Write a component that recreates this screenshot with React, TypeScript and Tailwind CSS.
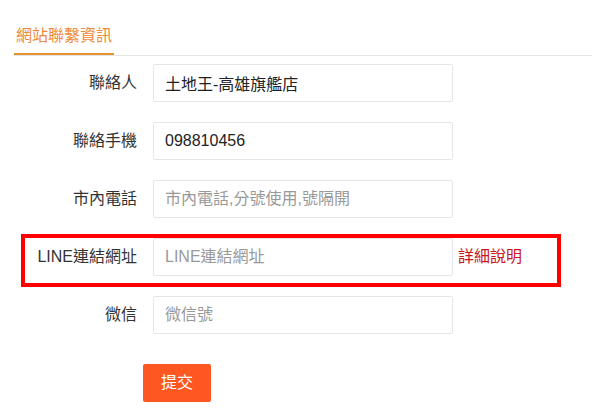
const rows = [
  { label: "聯絡人", value: "土地王-高雄旗艦店", placeholder: "" },
  { label: "聯絡手機", value: "098810456", placeholder: "" },
  { label: "市內電話", value: "", placeholder: "市內電話,分號使用,號隔開" },
  { label: "LINE連結網址", value: "", placeholder: "LINE連結網址", help: true },
  { label: "微信", value: "", placeholder: "微信號" },
];

export default function App() {
  return (
    <div
      className="w-[592px] h-[416px] bg-white pl-[14px] overflow-hidden"
      style={{ fontFamily: '"Liberation Sans", "Noto Sans CJK TC", sans-serif' }}
    >
      <div className="mt-[18px] flex border-b border-[#e6e6e6]">
        <div className="w-[100px] h-[37px] flex items-center justify-center border-b-2 border-[#e8912f] text-[16px] text-[#ef8a3a]">
          網站聯繫資訊
        </div>
      </div>

      <div className="mt-[8px] flex flex-col gap-y-[20px]">
        {rows.map((r) => (
          <div key={r.label} className="relative flex items-center">
            <label className="w-[123px] text-right text-[16px] text-[#333]">
              {r.label}
            </label>
            <input
              className="ml-[16px] w-[300px] h-[38px] border border-[#e6e6e6] rounded-[2px] px-[11px] text-[16px] text-[#222] placeholder:text-[#999] outline-none"
              defaultValue={r.value}
              placeholder={r.placeholder}
            />
            {r.help && (
              <>
                <span className="ml-[5px] text-[16px] text-[#c8161d]">詳細說明</span>
                <div className="absolute left-[7px] top-[-4px] w-[540px] h-[53px] border-4 border-[#ff0000] pointer-events-none" />
              </>
            )}
          </div>
        ))}
      </div>

      <button className="mt-[30px] ml-[129px] w-[68px] h-[38px] rounded-[2px] bg-[#ff5722] text-white text-[16px]">
        提交
      </button>
    </div>
  );
}
